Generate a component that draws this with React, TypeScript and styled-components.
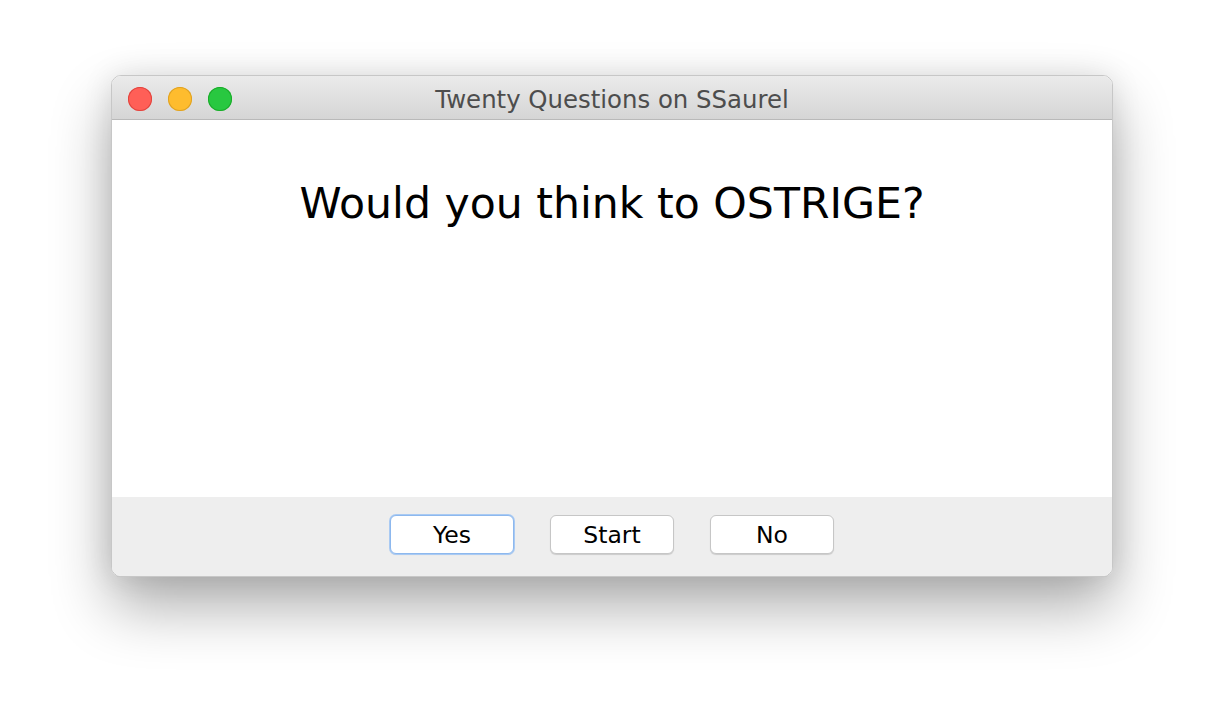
import React from "react";
import styled, { createGlobalStyle } from "styled-components";

const Global = createGlobalStyle`
  html, body { margin: 0; padding: 0; background: #ffffff; }
  body { width: 1224px; height: 724px; overflow: hidden; font-family: "DejaVu Sans", sans-serif; }
`;

const Desktop = styled.div`
  width: 1224px;
  height: 724px;
  display: flex;
  justify-content: center;
  padding-top: 75px;
  box-sizing: border-box;
  background: #ffffff;
`;

const Window = styled.div`
  width: 1002px;
  height: 502px;
  display: flex;
  flex-direction: column;
  border-radius: 10px;
  overflow: hidden;
  box-sizing: border-box;
  border: 1px solid rgba(0, 0, 0, 0.22);
  box-shadow: 0 30px 60px rgba(0, 0, 0, 0.32), 0 0 30px rgba(0, 0, 0, 0.1);
`;

const TitleBar = styled.div`
  height: 44px;
  flex: none;
  display: flex;
  align-items: center;
  position: relative;
  background: linear-gradient(#ebebeb, #d5d5d5);
  border-bottom: 1px solid #b9b9b9;
  box-sizing: border-box;
`;

const Lights = styled.div`
  display: flex;
  gap: 16px;
  padding-left: 16px;
  padding-top: 2px;
`;

const Light = styled.span<{ $c: string; $b: string }>`
  width: 24px;
  height: 24px;
  border-radius: 50%;
  background: ${(p) => p.$c};
  box-shadow: inset 0 0 0 1px ${(p) => p.$b};
`;

const Title = styled.div`
  position: absolute;
  left: 0;
  right: 0;
  top: 10px;
  text-align: center;
  font-family: "DejaVu Sans", sans-serif;
  font-size: 24.4px;
  line-height: 28px;
  color: #4d4d4d;
`;

const Body = styled.div`
  flex: 1;
  background: #ffffff;
  display: flex;
  justify-content: center;
  padding-top: 53px;
`;

const Question = styled.div`
  font-family: "DejaVu Sans", sans-serif;
  font-size: 42.6px;
  color: #000;
  height: 60px;
  line-height: 60px;
`;

const Footer = styled.div`
  height: 79px;
  flex: none;
  background: #eeeeee;
  display: flex;
  justify-content: center;
  align-items: flex-start;
  padding-top: 18px;
  box-sizing: border-box;
  gap: 36px;
`;

const Button = styled.button<{ $focus?: boolean }>`
  width: 124px;
  height: 39px;
  border-radius: 6px;
  background: #ffffff;
  font-family: "DejaVu Sans", sans-serif;
  font-size: 23.5px;
  line-height: 39px;
  padding: 0;
  color: #000;
  border: 1px solid ${(p) => (p.$focus ? "#8db8ee" : "#c6c6c6")};
  box-shadow: ${(p) =>
    p.$focus
      ? "0 0 0 1px #a9caf3, 0 1px 1px rgba(0,0,0,0.15)"
      : "0 1px 1px rgba(0,0,0,0.15)"};
`;

export default function App() {
  return (
    <>
      <Global />
      <Desktop>
        <Window>
          <TitleBar>
            <Lights>
              <Light $c="#ff5f57" $b="#e0443e" />
              <Light $c="#febc2e" $b="#dea123" />
              <Light $c="#28c840" $b="#1aab29" />
            </Lights>
            <Title>Twenty Questions on SSaurel</Title>
          </TitleBar>
          <Body>
            <Question>Would you think to OSTRIGE?</Question>
          </Body>
          <Footer>
            <Button $focus>Yes</Button>
            <Button>Start</Button>
            <Button>No</Button>
          </Footer>
        </Window>
      </Desktop>
    </>
  );
}
